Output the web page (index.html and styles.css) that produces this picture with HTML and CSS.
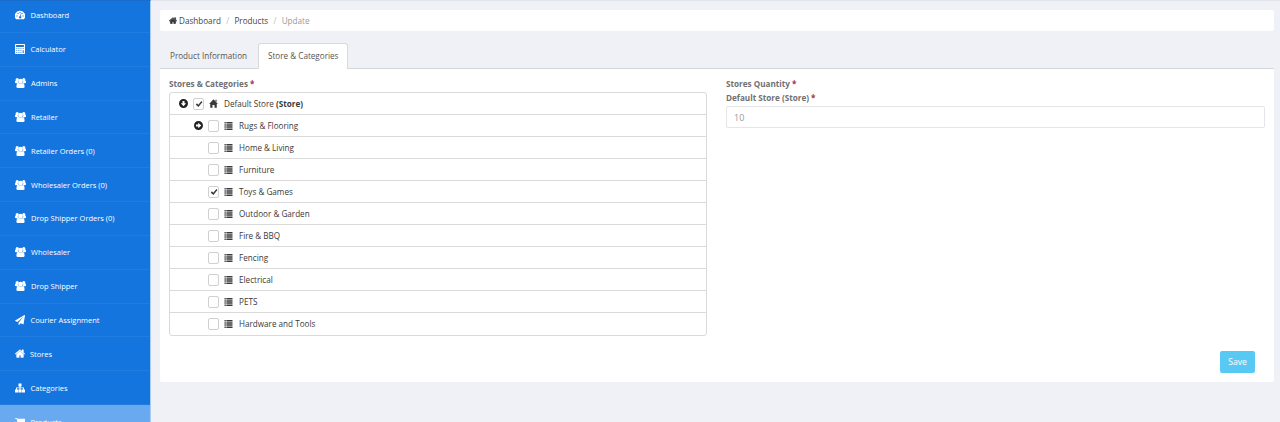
FILE: index.html
```
<!DOCTYPE html>
<html lang="en">
<head>
<meta charset="utf-8">
<title>Update Product</title>
<link rel="stylesheet" href="styles.css">
</head>
<body>
<svg class="sprite" aria-hidden="true">
<symbol id="gauge" viewBox="0 0 20 17"><path fill-rule="evenodd" d="M10 0a10 10 0 0 0-8.500 16q.5 1 1.500 1h14q1 0 1.500-1A10 10 0 0 0 10 0zM2.800 9.500h2.200v2.200H2.800zM5 4.500h2.200v2.200H5zM9 2.400h2.200v2.200H9zM13 4.500h2.200v2.200H13zM15 9.500h2.200v2.200H15zM11.200 6.300l1.300.4-1.100 4.400a2.300 2.300 0 1 1-1.500-.3z"/></symbol>
<symbol id="calc" viewBox="0 0 18 18"><path fill-rule="evenodd" d="M1 0h16l1 1v16l-1 1H1l-1-1V1zM2 2v3.500h14V2zM2.200 7.800v1.400h1.900V7.800zM6 7.800v1.400h1.900V7.800zM9.800 7.800v1.400h1.900V7.800zM13.800 7.800v1.400h1.900V7.800zM2.200 11.300v1.400h1.900v-1.400zM6 11.300v1.400h1.900v-1.400zM9.800 11.300v1.400h1.900v-1.400zM2.200 14.700v1.400h1.900v-1.400zM6 14.700v1.400h1.900v-1.400zM9.800 14.700v1.400h1.900v-1.400zM13.800 11.300v4.800h1.900v-4.800z"/></symbol>
<symbol id="users" viewBox="0 0 20 18"><circle cx="4" cy="2.900" r="2.900"/><circle cx="16" cy="2.900" r="2.900"/><circle cx="10" cy="5.500" r="4.200"/><path d="M1.400 4.500Q4 6.800 6 5.200 5.400 8 7.200 9.400H2Q0 9.400 0 7.600 0 5 1.400 4.500zM18.600 4.500Q16 6.800 14 5.200 14.600 8 12.800 9.400H18q2 0 2-1.800 0-2.600-1.400-3.100zM5.800 8.600q4.200 2.200 8.400 0 3.300.8 3.300 6.600 0 2.800-2.800 2.800H5.300q-2.800 0-2.800-2.800 0-5.800 3.300-6.600z"/></symbol>
<symbol id="plane" viewBox="0 0 1792 1792"><path d="M1764 11q33 24 27 64l-256 1536q-5 29-32 45-14 8-31 8-11 0-24-5l-453-185-242 295q-18 23-49 23-13 0-22-4-19-7-30.500-23.500t-11.500-36.500v-349l864-1059-1069 925-395-162q-37-14-40-55-2-40 32-59l1664-960q15-9 32-9 20 0 36 11z"/></symbol>
<symbol id="home" viewBox="64 150 1664 1440"><path d="M1472 992v480q0 26-19 45t-45 19h-384v-384H768v384H384q-26 0-45-19t-19-45V992q0-1 .5-3t.5-3l575-474 575 474q1 2 1 6zm223-69l-62 74q-8 9-21 11h-3q-13 0-21-7L896 424l-692 577q-12 8-24 7-13-2-21-11l-62-74q-8-10-7-23.500t11-21.500l719-599q32-26 76-26t76 26l244 204V288q0-14 9-23t23-9h192q14 0 23 9t9 23v408l219 182q10 8 11 21.500t-7 23.500z" stroke="currentColor" stroke-width="60"/></symbol>
<symbol id="tree" viewBox="0 0 18 16"><path d="M6.300 0h5.400v5.200H10V7h6.200v3.800H18V16h-5.600v-5.200h2V8.600H10v2.200h1.800V16H6.200v-5.200H8V8.600H3.600v2.200h2V16H0v-5.200h1.800V7H8V5.200H6.300z"/></symbol>
<symbol id="cart" viewBox="64 200 1664 1470"><path d="M704 1536q0 52-38 90t-90 38-90-38-38-90 38-90 90-38 90 38 38 90zm896 0q0 52-38 90t-90 38-90-38-38-90 38-90 90-38 90 38 38 90zm128-1088v512q0 24-16.500 42.500t-40.500 21.500l-1044 122q13 60 13 70 0 16-24 64h920q26 0 45 19t19 45-19 45-45 19H512q-26 0-45-19t-19-45q0-11 8-31.500t16-36 21.500-40 15.500-29.500L332 384H128q-26 0-45-19t-19-45 19-45 45-19h256q16 0 28.500 6.500t19.500 15.500 13 24.500 8 26 5.500 29.500 4.500 26h1201q26 0 45 19t19 45z"/></symbol>
<symbol id="house" viewBox="0 0 16 16"><path d="M8 .5l7.800 8.300h-2V15.500H9.800V10.500H6.200v5H2.200V8.800h-2zM11.500 1.500h2v4l-2-2z"/></symbol>
<symbol id="list" viewBox="0 0 8 8"><path d="M0 0h1.300v1.600H0zM1.900 0H8v1.600H1.900zM0 2.130h1.300v1.600H0zM1.900 2.130H8v1.600H1.900zM0 4.260h1.300v1.600H0zM1.900 4.260H8v1.600H1.900zM0 6.400h1.300V8H0zM1.900 6.400H8V8H1.900z"/></symbol>
<symbol id="arrow" viewBox="0 0 16 16"><path fill-rule="evenodd" d="M8 0a8 8 0 1 1 0 16A8 8 0 0 1 8 0zM3.500 6.200v3.600h4v3L13 8 7.500 3.200v3z"/></symbol>
<symbol id="check" viewBox="0 0 10 10"><path d="M1 5.800l1.400-1.600 1.700 1.600L8 1.200l1.300 1.200-5 6.200z"/></symbol>
</svg>
<div class="layout">
<nav class="sidebar">
<a class="item"><svg class="icon"><use href="#gauge"/></svg>Dashboard</a>
<a class="item"><svg class="icon"><use href="#calc"/></svg>Calculator</a>
<a class="item"><svg class="icon wide"><use href="#users"/></svg>Admins</a>
<a class="item"><svg class="icon wide"><use href="#users"/></svg>Retailer</a>
<a class="item"><svg class="icon wide"><use href="#users"/></svg>Retailer Orders (0)</a>
<a class="item"><svg class="icon wide"><use href="#users"/></svg>Wholesaler Orders (0)</a>
<a class="item"><svg class="icon wide"><use href="#users"/></svg>Drop Shipper Orders (0)</a>
<a class="item"><svg class="icon wide"><use href="#users"/></svg>Wholesaler</a>
<a class="item"><svg class="icon wide"><use href="#users"/></svg>Drop Shipper</a>
<a class="item"><svg class="icon"><use href="#plane"/></svg>Courier Assignment</a>
<a class="item"><svg class="icon narrow"><use href="#home"/></svg>Stores</a>
<a class="item"><svg class="icon"><use href="#tree"/></svg>Categories</a>
<a class="item active"><svg class="icon"><use href="#cart"/></svg>Products</a>
</nav>
<main class="main">
<div class="breadcrumb"><svg class="crumb-icon"><use href="#home"/></svg><span>Dashboard</span><span class="slash">/</span><span>Products</span><span class="slash">/</span><span class="current">Update</span></div>
<div class="tabs"><div class="tab">Product Information</div><div class="tab selected">Store &amp; Categories</div></div>
<section class="panel">
<div class="columns">
<div class="column">
<div class="label">Stores &amp; Categories <span class="required">*</span></div>
<div class="tree">
<div class="row root"><svg class="toggle down"><use href="#arrow"/></svg><span class="box"><svg class="check"><use href="#check"/></svg></span><svg class="kind store"><use href="#house"/></svg><span>Default Store <b>(Store)</b></span></div>
<div class="row"><svg class="toggle"><use href="#arrow"/></svg><span class="box"></span><svg class="kind"><use href="#list"/></svg><span>Rugs &amp; Flooring</span></div>
<div class="row"><span class="toggle"></span><span class="box"></span><svg class="kind"><use href="#list"/></svg><span>Home &amp; Living</span></div>
<div class="row"><span class="toggle"></span><span class="box"></span><svg class="kind"><use href="#list"/></svg><span>Furniture</span></div>
<div class="row"><span class="toggle"></span><span class="box"><svg class="check"><use href="#check"/></svg></span><svg class="kind"><use href="#list"/></svg><span>Toys &amp; Games</span></div>
<div class="row"><span class="toggle"></span><span class="box"></span><svg class="kind"><use href="#list"/></svg><span>Outdoor &amp; Garden</span></div>
<div class="row"><span class="toggle"></span><span class="box"></span><svg class="kind"><use href="#list"/></svg><span>Fire &amp; BBQ</span></div>
<div class="row"><span class="toggle"></span><span class="box"></span><svg class="kind"><use href="#list"/></svg><span>Fencing</span></div>
<div class="row"><span class="toggle"></span><span class="box"></span><svg class="kind"><use href="#list"/></svg><span>Electrical</span></div>
<div class="row"><span class="toggle"></span><span class="box"></span><svg class="kind"><use href="#list"/></svg><span>PETS</span></div>
<div class="row"><span class="toggle"></span><span class="box"></span><svg class="kind"><use href="#list"/></svg><span>Hardware and Tools</span></div>
</div>
</div>
<div class="column">
<div class="label">Stores Quantity <span class="required">*</span></div>
<div class="label">Default Store (Store) <span class="required">*</span></div>
<div class="quantity">10</div>
</div>
</div>
<div class="actions"><button class="save">Save</button></div>
</section>
</main>
</div>
</body>
</html>
```
FILE: styles.css
```
* { box-sizing: border-box; }
body { margin: 0; background: #f0f1f7; color: #444; font: 8.15px/14px "Open Sans", sans-serif; overflow: hidden; }
svg { fill: currentColor; flex: none; }
.sprite { display: none; }
.layout { display: flex; height: 422px; border-top: 1px solid #e3e4ea; }
.sidebar { width: 151px; height: 422px; margin-top: -1px; overflow: hidden; background: #1575df; border-right: 1px solid #a9ccf4; border-top: 1px solid #1a6cc8; flex: none; }
.item { display: flex; align-items: center; height: 33.850px; padding-left: 15px; color: #fff; font-size: 7.500px; font-weight: 500; border-bottom: 1px solid #207ce1; }
.item:first-child { margin-top: -2px; }
.item.active { background: #68a9ef; border-color: #68a9ef; }
.icon { width: 10px; height: 10px; margin-right: 5.500px; }
.icon.wide { width: 11px; height: 10px; margin-right: 5px; }
.icon.narrow { width: 10px; height: 9px; margin-right: 5px; }
.main { flex: 1; padding: 9px 6px 0 9px; }
.breadcrumb { display: flex; align-items: center; height: 21px; padding-left: 9px; background: #fff; border-radius: 2px; }
.crumb-icon { width: 8px; height: 7px; margin-right: 2px; color: #333; }
.slash { width: 13.500px; text-align: center; color: #bbb; }
.current { color: #999; }
.tabs { display: flex; height: 38px; padding-top: 12px; border-bottom: 1px solid #d5d6da; }
.tab { width: 98px; height: 26px; padding: 6px 0 0 10px; white-space: nowrap; color: #555; }
.tab.selected { width: 90px; padding: 5px 0 0 9px; background: #fff; border: 1px solid #d9dadd; border-bottom: 0; border-radius: 3px 3px 0 0; }
.panel { height: 313px; padding: 8px 9px 0; background: #fff; border-radius: 0 0 2px 2px; }
.columns { display: grid; grid-template-columns: 538px 539px; column-gap: 19px; height: 274px; }
.label { height: 14px; font-weight: 700; color: #707070; }
.required { color: #a0383e; }
.tree { margin-top: 1px; height: 244px; border: 1px solid #dadada; border-radius: 3px; }
.row { display: flex; align-items: center; height: 22.050px; padding-left: 24px; border-bottom: 1px solid #dadada; color: #3a3a3a; }
.row:last-child { border-bottom: 0; }
.root { padding-left: 9px; }
.toggle { width: 9px; height: 9px; margin: -1px 5px 0 0; flex: none; color: #222; }
.toggle.down { transform: rotate(90deg); }
.box { display: flex; align-items: center; justify-content: center; width: 11px; height: 12px; margin-right: 5px; border: 1px solid #d0d0d0; border-radius: 2px; }
.check { width: 8px; height: 8px; }
.kind { width: 9px; height: 8px; margin-right: 6px; }
.kind.store { width: 9px; height: 9px; }
.quantity { height: 22px; margin-top: 1px; padding: 4px 7px; color: #999; font-size: 9px; border: 1px solid #e6e6e8; border-radius: 2px; }
.actions { display: flex; justify-content: flex-end; padding-right: 10px; }
.save { width: 35px; height: 22px; padding: 0; border: 0; border-radius: 2px; background: #58c9f3; color: #fff; font: 500 8.600px "Open Sans", sans-serif; }
```
